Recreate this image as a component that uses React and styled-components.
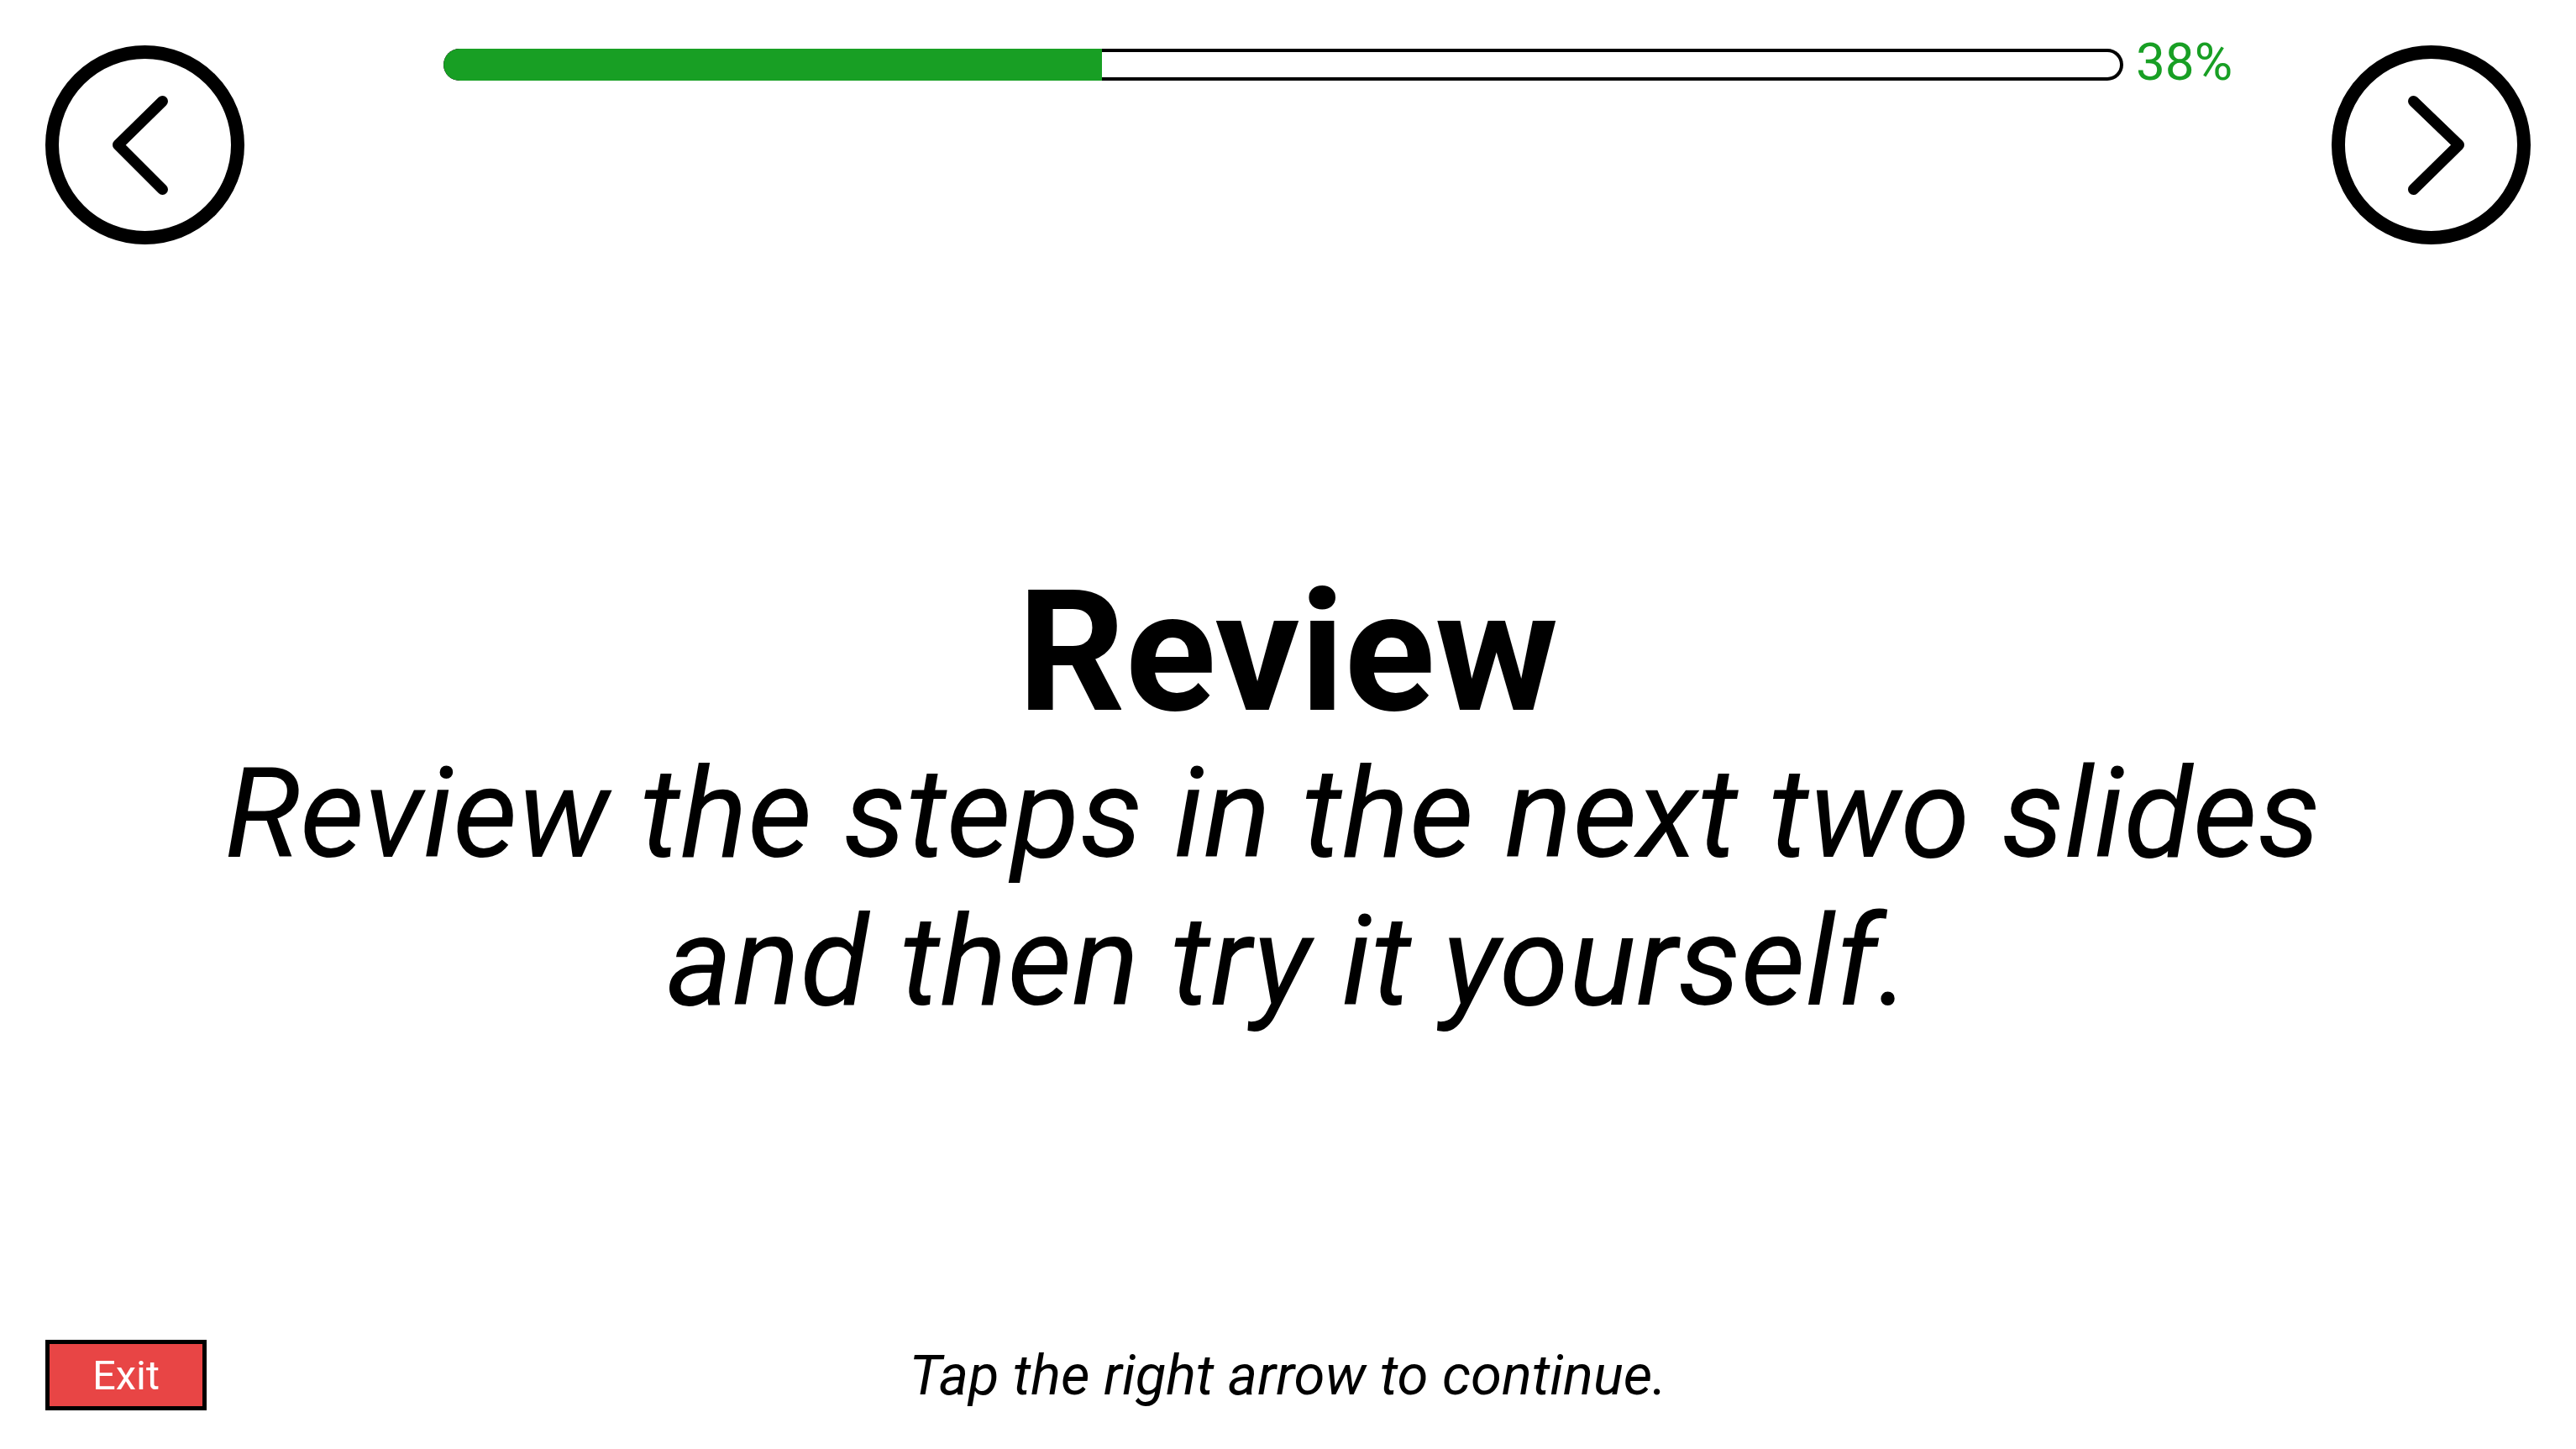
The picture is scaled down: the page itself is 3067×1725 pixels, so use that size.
import styled, { createGlobalStyle } from "styled-components";

const GlobalStyle = createGlobalStyle`
    html, body {
        margin:0;
        padding:0;
        background:#fff;
    }
    body{
        font-family:Roboto, "Noto Sans", sans-serif;
        color:#000;
    }
`;

const GREEN = "#189f24";

const Page = styled.div`
    display:flex;
    flex-direction:column;
    height:100vh;
    width:100%;
    box-sizing:border-box;
`;

const Header = styled.div`
    display:grid;
    grid-template-columns:237px 1fr 237px;
    padding:54px 54px 0;
`;

const NavButton = styled.button`
    width:237px;
    height:237px;
    padding:0;
    margin:0;
    border:none;
    background:none;
    cursor:pointer;
    display:block;
    & svg{
        display:block;
    }
`;

const ProgressRow = styled.div`
    display:flex;
    align-items:center;
    gap:15px;
    padding-left:237px;
    margin-top:4px;
    height:38px;
`;

const Track = styled.div`
    width:2000px;
    height:38px;
    border-radius:19px;
    background:#fff;
    box-shadow:inset 0 0 0 4px #000;
    overflow:hidden;
    display:flex;
`;

const Fill = styled.div`
    height:100%;
    width:calc(${(p) => p.$value / 100} * (100% - 38px) + 38px);
    background:${GREEN};
    border-radius:19px 0 0 19px;
`;

const Percent = styled.span`
    font-size:62px;
    line-height:72px;
    color:${GREEN};
    margin-top:-7px;
`;

const Main = styled.div`
    flex:1;
    display:flex;
    flex-direction:column;
    align-items:center;
    justify-content:center;
    padding-top:24px;
`;

const Title = styled.h1`
    margin:0;
    font-size:200px;
    line-height:200px;
    font-weight:700;
`;

const Subtitle = styled.p`
    margin:4px 0 0;
    font-size:150px;
    line-height:176px;
    font-style:italic;
    font-weight:400;
    text-align:center;
`;

const Footer = styled.div`
    display:grid;
    grid-template-columns:1fr auto 1fr;
    align-items:center;
    padding:0 54px 46px;
`;

const ExitButton = styled.button`
    justify-self:start;
    width:192px;
    height:84px;
    box-sizing:border-box;
    border:5px solid #000;
    background:#e84545;
    color:#fff;
    font-family:Roboto, sans-serif;
    font-size:49px;
    padding:0;
    cursor:pointer;
`;

const Hint = styled.span`
    font-size:67px;
    line-height:78px;
    font-style:italic;
`;

const Arrow = ({ dir }) => (
    <svg width="237" height="237" viewBox="0 0 237 237">
        <circle cx="118.5" cy="118.5" r="110.5" fill="none" stroke="#000" strokeWidth="16" />
        {dir === "left" ? (
            <polyline points="139.5,66.5 86.5,118.5 139.5,171.5" fill="none" stroke="#000" strokeWidth="13" strokeLinecap="round" strokeLinejoin="round" />
        ) : (
            <polyline points="97.5,66.5 151.5,118.5 97.5,171.5" fill="none" stroke="#000" strokeWidth="13" strokeLinecap="round" strokeLinejoin="round" />
        )}
    </svg>
);

const App = () => {
    const progress = 38;
    return (
        <Page>
            <GlobalStyle />
            <Header>
                <NavButton aria-label="Previous"><Arrow dir="left" /></NavButton>
                <ProgressRow>
                    <Track><Fill $value={progress} /></Track>
                    <Percent>{progress}%</Percent>
                </ProgressRow>
                <NavButton aria-label="Next"><Arrow dir="right" /></NavButton>
            </Header>
            <Main>
                <Title>Review</Title>
                <Subtitle>
                    Review the steps in the next two slides{"\u00a0"}<br />
                    and then try it yourself.
                </Subtitle>
            </Main>
            <Footer>
                <ExitButton>Exit</ExitButton>
                <Hint>Tap the right arrow to continue.</Hint>
                <span />
            </Footer>
        </Page>
    );
};

export default App;
